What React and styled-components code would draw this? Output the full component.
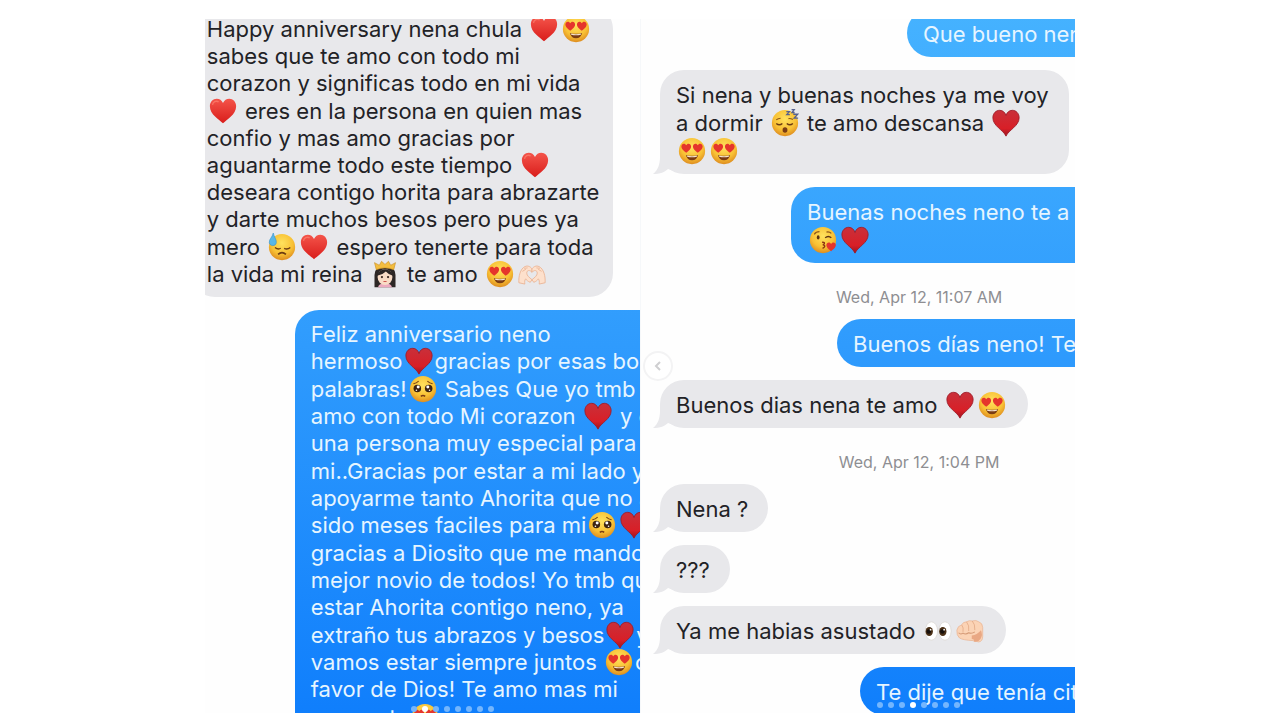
import React from "react";
import styled, { createGlobalStyle } from "styled-components";

const HEART =
  "M16 30C12 26 1 20 1 10.500C1 5.500 4.500 2 8.800 2C12 2 14.600 3.800 16 6.800C17.400 3.800 20 2 23.200 2C27.500 2 31 5.500 31 10.500C31 20 20 26 16 30Z";

const HAND =
  "M1 26C0.500 19 2.500 10 8 7.500C11 6 14 7.500 16 10V14C13.500 11 10 11.500 10 15C10 18 13 20 16 22.500L14 25.500C11.500 24.500 9.500 23 8.800 21.500C7.500 23 7.500 25 7.800 27.500Z";

const Face = () => <circle cx="16" cy="16" r="15" fill="url(#face)" />;

const MiniHeart = ({ at, size }) => (
  <path d={HEART} fill="#e5352c" transform={`translate(${at}) scale(${size})`} />
);

const GLYPHS = {
  "❤️": (
    <>
      <path d={HEART} fill="url(#red)" />
      <path d="M4 9C4.500 5.500 8 4 11 5.500" stroke="#ff8d7c" strokeWidth="1.500" fill="none" opacity="0.600" />
    </>
  ),
  "♥️": (
    <path
      d="M16 31C13 24 1 19.500 1 10C1 5 4.500 1.500 8.800 1.500C12.200 1.500 15 3.800 16 7.500C17 3.800 19.800 1.500 23.200 1.500C27.500 1.500 31 5 31 10C31 19.500 19 24 16 31Z"
      fill="url(#suit)"
      stroke="#9d1c28"
      strokeWidth="1"
    />
  ),
  "😍": (
    <>
      <Face />
      <MiniHeart at="3.500 7" size={0.37} />
      <MiniHeart at="16.700 7" size={0.37} />
      <path d="M9 20.500Q16 22.500 23 20.500Q21.500 26.500 16 26.500Q10.500 26.500 9 20.500Z" fill="#7a3c14" />
      <path d="M10 21.200Q16 22.800 22 21.200L21.500 22.500Q16 24 10.500 22.500Z" fill="#f6e3cf" />
    </>
  ),
  "😓": (
    <>
      <Face />
      <path d="M8 16.500Q11.500 19.500 14.500 17.500M18.500 17.500Q22 19.500 25.500 16.500" stroke="#6b3b12" strokeWidth="1.500" fill="none" />
      <path d="M11.500 24.500Q16 20.500 20.500 24.500" stroke="#6b3b12" strokeWidth="1.800" fill="none" />
      <path d="M6 0C5 5 1 7 1.500 11C2 15.500 9 15.500 9.500 11C9.800 7 7 5 6 0Z" fill="#58b7e8" stroke="#3590c8" strokeWidth="0.700" />
    </>
  ),
  "🥺": (
    <>
      <Face />
      <circle cx="9.500" cy="15.500" r="4.300" fill="#3d2413" />
      <circle cx="22.500" cy="15.500" r="4.300" fill="#3d2413" />
      <circle cx="10.500" cy="13.800" r="1.700" fill="#fff" />
      <circle cx="21.500" cy="13.800" r="1.700" fill="#fff" />
      <circle cx="8.500" cy="17.500" r="0.900" fill="#fff" />
      <circle cx="23.500" cy="17.500" r="0.900" fill="#fff" />
      <path d="M5 10Q8.500 9.500 11 7M27 10Q23.500 9.500 21 7" stroke="#7b4614" strokeWidth="1.400" fill="none" />
      <path d="M13.500 24.500Q16 22.500 18.500 24.500" stroke="#7b3c14" strokeWidth="1.800" fill="none" />
    </>
  ),
  "😴": (
    <>
      <Face />
      <path d="M6 16.500Q9.500 19.500 13 16.500M18 16.500Q21.500 19.500 25 16.500" stroke="#6b3b12" strokeWidth="1.600" fill="none" />
      <path d="M6 12.500Q8 10.500 11 10.500M20 11Q22 10.500 25 12" stroke="#8e5718" strokeWidth="1.200" fill="none" />
      <ellipse cx="16" cy="24" rx="2.800" ry="3.200" fill="#7a3c14" />
      <path
        d="M17.500 3H21L18 6.500H21.500M23.500 0.800H26.500L24 4H27M25.500 6H30.500L26.500 10.500H31"
        stroke="#55618f"
        strokeWidth="1.500"
        fill="none"
      />
    </>
  ),
  "😘": (
    <>
      <Face />
      <ellipse cx="10.500" cy="13" rx="1.600" ry="2.400" fill="#5c3312" />
      <path d="M18.500 13.500Q22 10.500 25.500 13.500" stroke="#5c3312" strokeWidth="1.600" fill="none" />
      <path d="M6 9.500Q8 6.500 12 6.500M20 7Q23 6 25.500 8.500" stroke="#8e5718" strokeWidth="1.300" fill="none" />
      <path d="M15 18.500Q19.500 18.500 16.500 21.500Q20 23 15.500 25.500" stroke="#8b3212" strokeWidth="1.600" fill="none" />
      <MiniHeart at="19.500 18" size={0.36} />
    </>
  ),
  "👸🏻": (
    <>
      <path d="M4 31V17Q4 7 16 7Q28 7 28 17V31Z" fill="#2d2725" />
      <path d="M8 31Q9 26.500 16 26.500Q23 26.500 24 31Z" fill="#edaabf" />
      <ellipse cx="16" cy="19.500" rx="8.500" ry="9" fill="#f9dcc6" />
      <path d="M7 18Q9 10.500 16 10.500Q23 10.500 25 18Q20 16.500 17 13Q13 17 7 18Z" fill="#2d2725" />
      <circle cx="12.500" cy="19.500" r="1.300" fill="#3c2a23" />
      <circle cx="19.500" cy="19.500" r="1.300" fill="#3c2a23" />
      <path d="M13.500 24Q16 26.500 18.500 24Z" fill="#c8453f" />
      <path d="M6 11L4 3L9.500 6L12 1.500L16 5L20 1.500L22.500 6L28 3L26 11Q16 7 6 11Z" fill="#f3bd3e" stroke="#c98d22" strokeWidth="0.700" />
    </>
  ),
  "🫶🏻": (
    <g fill="#fde0cc" stroke="#eab394" strokeWidth="1" strokeLinejoin="round">
      <path d={HAND} />
      <path d={HAND} transform="matrix(-1 0 0 1 32 0)" />
      <path d="M5 13L9 10.500M7 9.500L11 9M27 13L23 10.500M25 9.500L21 9" fill="none" />
    </g>
  ),
  "👀": (
    <>
      <ellipse cx="8.500" cy="16" rx="7" ry="10.500" fill="#fff" stroke="#d9d4cf" strokeWidth="0.800" />
      <ellipse cx="24" cy="16" rx="7" ry="10.500" fill="#fff" stroke="#d9d4cf" strokeWidth="0.800" />
      <ellipse cx="6" cy="16.500" rx="4.200" ry="5.200" fill="#4b3016" />
      <ellipse cx="21.500" cy="16.500" rx="4.200" ry="5.200" fill="#4b3016" />
      <circle cx="5.500" cy="16.500" r="2.600" fill="#17100c" />
      <circle cx="21" cy="16.500" r="2.600" fill="#17100c" />
      <circle cx="7.500" cy="14.500" r="1" fill="#fff" />
      <circle cx="23" cy="14.500" r="1" fill="#fff" />
    </>
  ),
  "👊🏻": (
    <>
      <path
        d="M1 15Q2 10 6.500 9Q8 5.500 12 5.500Q15 3.500 18.500 4.500Q23 3 26 5.500Q30.500 7 30.500 12V22Q30.500 28 26 28.500L20 27Q8 26.500 4 24Q0.500 21 1 15Z"
        fill="#fbd3b5"
        stroke="#e8b392"
        strokeWidth="0.800"
      />
      <path d="M6.500 9Q9 12 8 17M12 5.500Q15.500 9.500 14.500 16M18.500 4.500Q22 8 21.500 15" stroke="#e3ab88" strokeWidth="1" fill="none" />
      <path d="M3 18Q5 20.500 8 18.500Q11 20.500 14.500 18Q18 19.500 21.500 17" stroke="#d59a76" strokeWidth="1.200" fill="none" />
      <path d="M18 21Q24 20.500 28.500 15Q31 20 28 25Q25 29.500 20 28Q22 25.500 18 25Z" fill="#e9a884" />
    </>
  ),
};

const EMOJI = /(❤️|♥️|😍|😓|🥺|😴|😘|👸🏻|🫶🏻|👀|👊🏻)/u;

const Line = ({ text }) => (
  <div>
    {text.split(EMOJI).map((part, index) =>
      GLYPHS[part] ? (
        <Emoji key={index} viewBox="0 0 32 32" role="img" aria-label={part}>
          {GLYPHS[part]}
        </Emoji>
      ) : (
        part
      )
    )}
  </div>
);

const Message = ({ message }) => {
  if (message.time) return <Time>{message.time}</Time>;
  const Bubble = message.sent ? Sent : Received;
  return (
    <Bubble $inset={message.inset} $height={message.height}>
      {message.lines.map((line, index) => (
        <Line key={index} text={line} />
      ))}
      {message.tail && (
        <Tail viewBox="0 0 24 24" aria-hidden="true">
          <path d="M7 0V7C7 14 5 20 0 24C7 24 12 22 15 19L24 22V0Z" />
        </Tail>
      )}
    </Bubble>
  );
};

const ANNIVERSARY = [
  {
    height: 292,
    lines: [
      "Happy anniversary nena chula ❤️😍",
      "sabes que te amo con todo mi",
      "corazon y significas todo en mi vida",
      "❤️ eres en la persona en quien mas",
      "confio y mas amo gracias por",
      "aguantarme todo este tiempo ❤️",
      "deseara contigo horita para abrazarte",
      "y darte muchos besos pero pues ya",
      "mero 😓❤️ espero tenerte para toda",
      "la vida mi reina 👸🏻 te amo 😍🫶🏻",
    ],
  },
  {
    sent: true,
    inset: 104,
    height: 430,
    lines: [
      "Feliz anniversario neno",
      "hermoso♥️gracias por esas bon",
      "palabras!🥺 Sabes Que yo tmb t",
      "amo con todo Mi corazon ♥️ y e",
      "una persona muy especial para",
      "mi..Gracias por estar a mi lado y",
      "apoyarme tanto Ahorita que no a",
      "sido meses faciles para mi🥺♥️",
      "gracias a Diosito que me mando",
      "mejor novio de todos! Yo tmb qu",
      "estar Ahorita contigo neno, ya",
      "extraño tus abrazos y besos♥️y",
      "vamos estar siempre juntos 😍c",
      "favor de Dios! Te amo mas mi",
      "amorcote😍",
    ],
  },
];

const GOOD_NIGHT = [
  { sent: true, inset: 247, lines: ["Que bueno nen"] },
  {
    tail: true,
    lines: [
      "Si nena y buenas noches ya me voy",
      "a dormir 😴 te amo descansa ♥️",
      "😍😍",
    ],
  },
  { sent: true, inset: 131, lines: ["Buenas noches neno te a", "😘♥️"] },
  { time: "Wed, Apr 12, 11:07 AM" },
  { sent: true, inset: 177, lines: ["Buenos días neno! Te"] },
  { tail: true, lines: ["Buenos dias nena te amo ♥️😍"] },
  { time: "Wed, Apr 12, 1:04 PM" },
  { tail: true, lines: ["Nena ?"] },
  { tail: true, lines: ["???"] },
  { tail: true, lines: ["Ya me habias asustado 👀👊🏻"] },
  { sent: true, inset: 200, lines: ["Te dije que tenía cit"] },
];

const SLIDES = [0, 1, 2, 3, 4, 5, 6, 7];

export default function App() {
  return (
    <Page>
      <GlobalStyle />
      <Gradients aria-hidden="true">
        <defs>
          <radialGradient id="face" cx="0.5" cy="0.35" r="0.7">
            <stop offset="0" stopColor="#ffe25e" />
            <stop offset="0.6" stopColor="#f8c034" />
            <stop offset="1" stopColor="#d9831c" />
          </radialGradient>
          <linearGradient id="red" x1="0" y1="0" x2="0" y2="1">
            <stop offset="0" stopColor="#f4544a" />
            <stop offset="1" stopColor="#d91d1b" />
          </linearGradient>
          <linearGradient id="suit" x1="0" y1="0" x2="0" y2="1">
            <stop offset="0" stopColor="#c9303a" />
            <stop offset="0.7" stopColor="#d81f27" />
            <stop offset="1" stopColor="#9c1420" />
          </linearGradient>
        </defs>
      </Gradients>
      <Collage>
        <Shot>
          <Thread $top={-14} $left={-14} $leading={27}>
            {ANNIVERSARY.map((message, index) => (
              <Message key={index} message={message} />
            ))}
          </Thread>
          <Dots $left={206} $bottom={1}>
            {SLIDES.map((slide) => (
              <Dot key={slide} $active={slide === 1} />
            ))}
          </Dots>
        </Shot>
        <Shot>
          <Thread $top={-10} $left={19} $leading={28}>
            {GOOD_NIGHT.map((message, index) => (
              <Message key={index} message={message} />
            ))}
          </Thread>
          <Previous type="button" aria-label="Previous">
            <svg viewBox="0 0 12 12" width="12" height="12">
              <path d="M8 2L4 6L8 10" fill="none" stroke="#cfcfd1" strokeWidth="2" />
            </svg>
          </Previous>
          <Dots $left={236} $bottom={5}>
            {SLIDES.map((slide) => (
              <Dot key={slide} $active={slide === 3} />
            ))}
          </Dots>
        </Shot>
      </Collage>
    </Page>
  );
}

const GlobalStyle = createGlobalStyle`
  body {
    margin: 0;
    background: #fff;
  }
`;

const Page = styled.main`
  box-sizing: border-box;
  height: 100vh;
  padding: 19px 16% 7px;
  font-family: Inter, "Liberation Sans", sans-serif;
  font-size: 22px;
  color: #222226;
`;

const Gradients = styled.svg`
  position: absolute;
  width: 0;
  height: 0;
`;

const Collage = styled.div`
  display: grid;
  grid-template-columns: 1fr 1fr;
  height: 100%;
`;

const Shot = styled.section`
  position: relative;
  min-width: 0;
  overflow: hidden;
  background: #fefefe;

  & + & {
    border-left: 1px solid #f6f8fa;
  }
`;

const Thread = styled.div`
  display: flex;
  flex-direction: column;
  align-items: flex-start;
  gap: 13px;
  margin: ${({ $top }) => $top}px -123px 0 ${({ $left }) => $left}px;
  line-height: ${({ $leading }) => $leading}px;
`;

const Received = styled.div`
  position: relative;
  isolation: isolate;
  box-sizing: border-box;
  display: grid;
  grid-auto-rows: 1fr;
  min-height: ${({ $height = 48 }) => $height}px;
  max-width: 422px;
  padding: 11px 20px 9px 16px;
  border-radius: 24px;
  background: #e8e8eb;
  white-space: nowrap;
`;

const Sent = styled(Received)`
  align-self: stretch;
  max-width: none;
  margin-left: ${({ $inset }) => $inset}px;
  background: linear-gradient(#46b3ff, #2f9bfd 48%, #0f7efc) fixed;
  color: #e6f5ff;
`;

const Emoji = styled.svg`
  width: 28px;
  height: 28px;
  margin: -4px 2px;
  vertical-align: -2px;
`;

const Tail = styled.svg`
  position: absolute;
  left: -7px;
  bottom: 0;
  z-index: -1;
  width: 24px;
  height: 24px;
  fill: #e8e8eb;
`;

const Time = styled.time`
  align-self: stretch;
  padding: 12px 20px 0 0;
  font-size: 16px;
  line-height: 18px;
  text-align: center;
  color: #8e8e92;
`;

const Previous = styled.button`
  position: absolute;
  top: 50%;
  left: 2px;
  display: flex;
  align-items: center;
  justify-content: center;
  width: 30px;
  height: 30px;
  margin-top: -15px;
  padding: 0;
  border: 2px solid #f3f3f4;
  border-radius: 50%;
  background: #fff;
`;

const Dots = styled.div`
  position: absolute;
  bottom: ${({ $bottom }) => $bottom}px;
  left: ${({ $left }) => $left}px;
  display: flex;
  gap: 5px;
`;

const Dot = styled.span`
  width: 6px;
  height: 6px;
  border-radius: 50%;
  background: ${({ $active }) => ($active ? "#fff" : "#74b6fd")};
`;
